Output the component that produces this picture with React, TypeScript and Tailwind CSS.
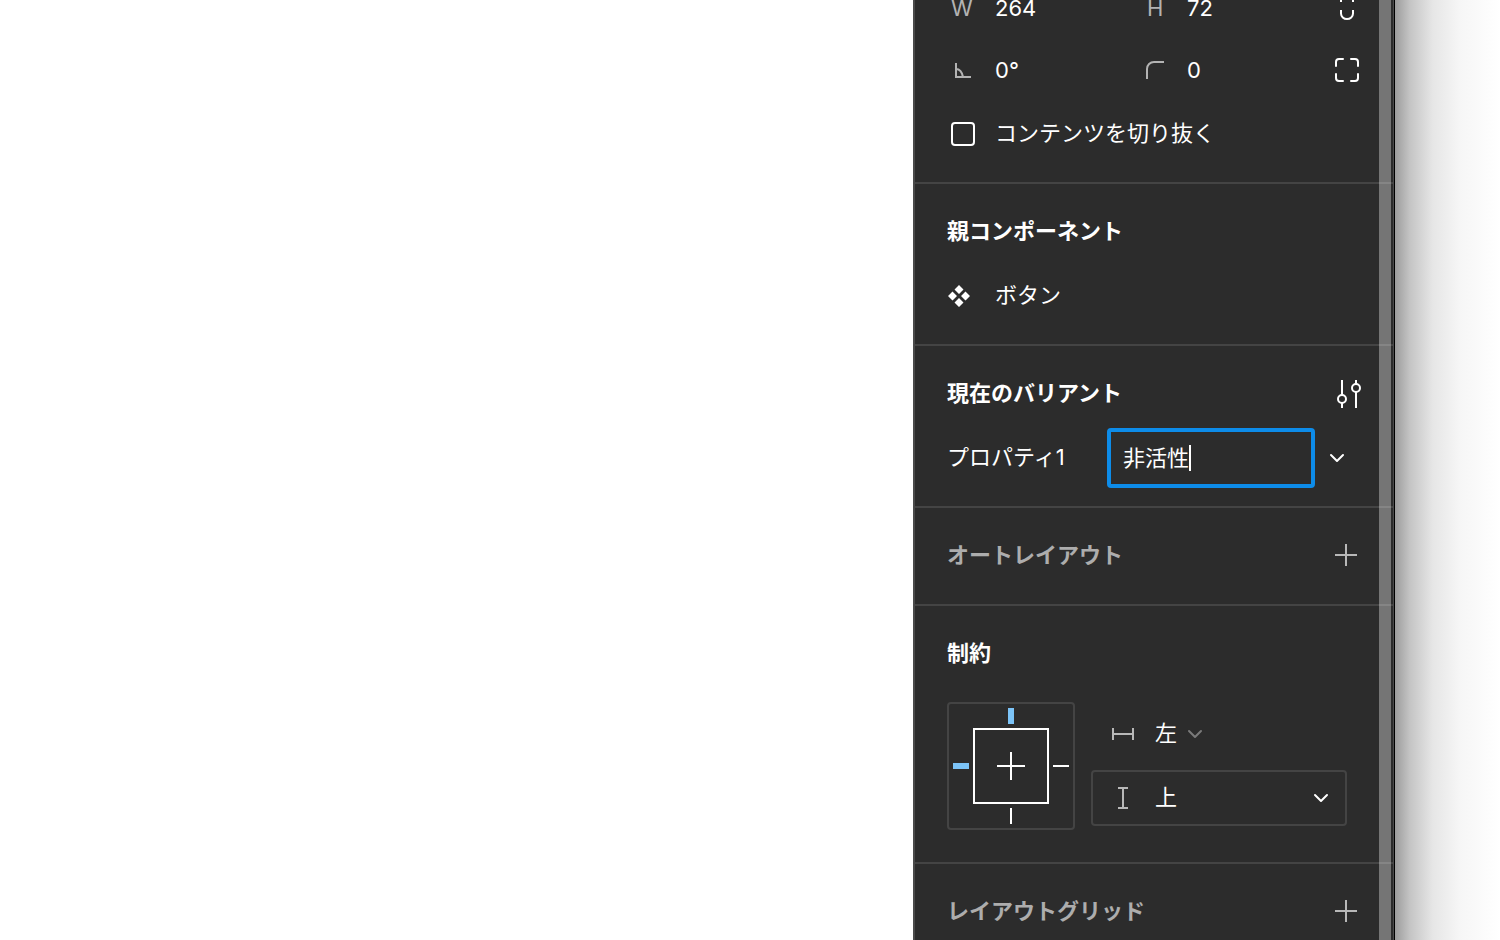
import { ChevronDown } from 'lucide-react';

const font = { fontFamily: '"Inter", "Noto Sans CJK JP", sans-serif' };

const Divider = () => <div className="h-[2px] w-full bg-[#444444]" />;

const Heading = ({ children }: { children: string }) => (
  <span className="pb-[2px] text-[22px] font-bold leading-8 text-white">{children}</span>
);

const PlusIcon = ({ size, color }: { size: number; color: string }) => (
  <svg width={size} height={size} viewBox={`0 0 ${size} ${size}`} fill="none" stroke={color} strokeWidth="2">
    <path d={`M${size / 2} 0v${size}M0 ${size / 2}h${size}`} />
  </svg>
);

const AddRow = ({ label }: { label: string }) => (
  <div className="flex h-[96px] items-center justify-between pb-[2px] pl-[32px] pr-[38px]">
    <span className="text-[22px] font-bold leading-8 text-[#adadad]">{label}</span>
    <PlusIcon size={22} color="#b8b8b8" />
  </div>
);

const LinkIcon = () => (
  <div className="-mt-[2px] flex w-6 justify-center">
    <svg width="14" height="26" viewBox="0 0 14 26" fill="none" stroke="#ffffff" strokeWidth="2">
      <path d="M1 0v8M13 0v8M1 16v3.500a6 5.500 0 0 0 12 0V16" />
    </svg>
  </div>
);

const CornerIcon = () => (
  <svg width="18" height="18" viewBox="0 0 18 18" fill="none" stroke="#b3b3b3" strokeWidth="2">
    <path d="M1 18V8a7 7 0 0 1 7-7h10" />
  </svg>
);

const AngleIcon = () => (
  <svg width="16" height="15" viewBox="0 0 16 15" fill="none" stroke="#b3b3b3" strokeWidth="2">
    <path d="M1 0v14h15M1 6c4 0 6 3 7 8" />
  </svg>
);

const ClipIcon = () => (
  <svg width="24" height="24" viewBox="0 0 24 24" fill="none" stroke="#ffffff" strokeWidth="2" strokeLinecap="round">
    <path d="M1 8V4a3 3 0 0 1 3-3h4M16 1h4a3 3 0 0 1 3 3v4M23 16v4a3 3 0 0 1-3 3h-4M8 23H4a3 3 0 0 1-3-3v-4" />
  </svg>
);

const ComponentIcon = () => (
  <svg width="24" height="24" viewBox="0 0 24 24" fill="#ffffff">
    <path d="M12 1l4.500 4.500L12 10 7.500 5.500zM5.500 7.500L10 12l-4.500 4.500L1 12zM18.500 7.500L23 12l-4.500 4.500L14 12zM12 14l4.500 4.500L12 23l-4.500-4.500z" />
  </svg>
);

const SlidersIcon = () => (
  <svg width="26" height="28" viewBox="0 0 26 28" fill="none" stroke="#ffffff" strokeWidth="2">
    <path d="M6 0v15M6 23v5M20 0v4M20 12v16" />
    <circle cx="6" cy="19" r="4" />
    <circle cx="20" cy="8" r="4" />
  </svg>
);

const SizeIcon = () => (
  <svg width="22" height="12" viewBox="0 0 22 12" fill="none" stroke="#b8b8b8" strokeWidth="2">
    <path d="M1 0v12M21 0v12M1 6h20" />
  </svg>
);

const HeightIcon = () => (
  <svg width="12" height="22" viewBox="0 0 12 22" fill="none" stroke="#b8b8b8" strokeWidth="2">
    <path d="M1 1h10M1 21h10M6 1v20" />
  </svg>
);

const ConstraintBox = () => (
  <div className="grid h-[128px] w-[128px] grid-cols-[24px_76px_24px] grid-rows-[24px_76px_24px] rounded-[4px] border-2 border-[#444444]">
    <div />
    <div className="flex items-center justify-center">
      <div className="h-4 w-[6px] bg-[#7cc4f8]" />
    </div>
    <div />
    <div className="flex items-center justify-center">
      <div className="h-[6px] w-4 bg-[#7cc4f8]" />
    </div>
    <div className="flex items-center justify-center border-2 border-white">
      <PlusIcon size={28} color="#ffffff" />
    </div>
    <div className="flex items-center justify-center">
      <div className="h-[2px] w-4 bg-white" />
    </div>
    <div />
    <div className="flex items-center justify-center">
      <div className="h-4 w-[2px] bg-white" />
    </div>
    <div />
  </div>
);

export default function App() {
  return (
    <div className="flex h-[940px] w-[1500px] overflow-hidden bg-white text-white" style={font}>
      <div className="w-[913px] shrink-0" />

      <div className="relative h-[940px] w-[482px] shrink-0 overflow-hidden border-l-2 border-[#4a4a4a] bg-[#2c2c2c] text-[22px]">
        <div className="-mt-[22px]">
          <div className="grid h-[60px] grid-cols-[44px_152px_1fr] items-center pl-[36px]">
            <span className="text-[#b3b3b3]">W</span>
            <span>264</span>
            <div className="flex items-center justify-between pr-[36px]">
              <span className="flex items-center">
                <span className="w-[40px] text-[#b3b3b3]">H</span>
                <span>72</span>
              </span>
              <LinkIcon />
            </div>
          </div>

          <div className="grid h-16 grid-cols-[40px_151px_1fr] items-center pl-[40px]">
            <AngleIcon />
            <span>0°</span>
            <div className="flex items-center justify-between pr-[36px]">
              <span className="flex items-center">
                <span className="w-[41px]">
                  <CornerIcon />
                </span>
                <span>0</span>
              </span>
              <ClipIcon />
            </div>
          </div>

          <div className="flex h-16 items-center pl-[36px]">
            <div className="h-6 w-6 rounded-[4px] border-2 border-white" />
            <span className="ml-[20px] pb-[2px]">コンテンツを切り抜く</span>
          </div>

          <div className="h-[16px]" />
          <Divider />

          <div className="flex h-[96px] items-center pl-[32px]">
            <Heading>親コンポーネント</Heading>
          </div>
          <div className="flex h-[32px] items-center pl-[32px]">
            <ComponentIcon />
            <span className="ml-[24px] pb-[2px]">ボタン</span>
          </div>
          <div className="h-[32px]" />
          <Divider />

          <div className="flex h-[96px] items-center justify-between pl-[32px] pr-[33px]">
            <Heading>現在のバリアント</Heading>
            <SlidersIcon />
          </div>
          <div className="flex h-[32px] items-center pl-[32px]">
            <span className="w-[160px] pb-[2px]">プロパティ1</span>
            <div className="-my-4 flex h-[60px] w-[208px] items-center rounded-[4px] border-4 border-[#0d8ce9] pl-[12px]">
              <span>非活性</span>
              <span className="h-[26px] w-[2px] bg-white" />
            </div>
            <ChevronDown className="ml-[10px] h-6 w-6 text-white" strokeWidth={2} />
          </div>
          <div className="h-[32px]" />
          <Divider />

          <AddRow label="オートレイアウト" />
          <Divider />

          <div className="flex h-[96px] items-center pl-[32px]">
            <Heading>制約</Heading>
          </div>
          <div className="flex items-start pl-[32px]">
            <ConstraintBox />
            <div className="ml-[16px] flex w-[256px] flex-col gap-[8px] pt-[4px]">
              <div className="flex h-[56px] items-center pl-[21px]">
                <SizeIcon />
                <span className="ml-[21px] pb-[2px]">左</span>
                <ChevronDown className="ml-[6px] h-6 w-6 text-[#7a7a7a]" strokeWidth={2} />
              </div>
              <div className="flex h-[56px] items-center rounded-[4px] border-2 border-[#444444] pl-[24px] pr-[12px]">
                <HeightIcon />
                <span className="ml-[26px] pb-[2px]">上</span>
                <ChevronDown className="ml-auto h-6 w-6 text-white" strokeWidth={2} />
              </div>
            </div>
          </div>
          <div className="h-[32px]" />
          <Divider />

          <AddRow label="レイアウトグリッド" />
        </div>

        <div className="absolute bottom-0 right-[4px] top-0 w-[12px] bg-white/35" />
        <div className="absolute bottom-0 right-[1px] top-0 w-[1px] bg-[#4a4a4a]" />
        <div className="absolute bottom-0 right-0 top-0 w-[1px] bg-black" />
      </div>

      <div className="flex-1 bg-[linear-gradient(to_right,#9c9c9c,#c4c4c4_14%,#e6e6e6_36%,#f6f6f6_62%,#ffffff)]" />
    </div>
  );
}
